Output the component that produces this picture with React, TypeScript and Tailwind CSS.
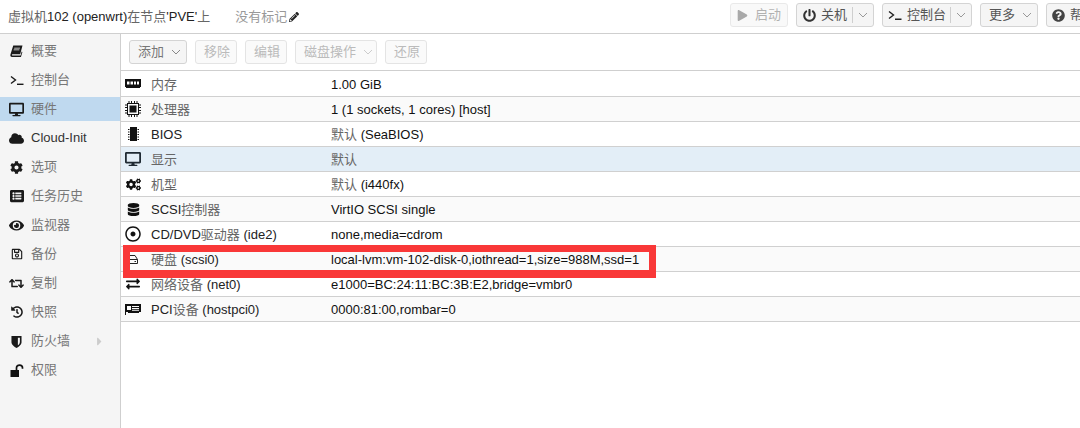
import React from "react";
import {
  FaDesktop, FaCloud, FaCog, FaCogs, FaListAlt, FaEye, FaRegSave, FaRetweet, FaHistory,
  FaPlay, FaPowerOff, FaQuestionCircle, FaPencilAlt, FaDatabase,
  FaRegDotCircle, FaExchangeAlt, FaCaretRight,
} from "react-icons/fa";

const Term = ({ className = "" }: { className?: string }) => (
  <svg viewBox="0 0 14 12" width="14" height="12" className={className} fill="none" stroke="currentColor" strokeWidth="1.4">
    <path d="M1 2.5 L5.5 6 L1 9.5" />
    <path d="M7 10.3 H13.5" />
  </svg>
);

const Chevron = ({ c = "#777" }: { c?: string }) => (
  <svg viewBox="0 0 10 6" width="10" height="6" fill="none" stroke={c} strokeWidth="1">
    <path d="M1 1 L5 5 L9 1" />
  </svg>
);

const Book = () => (
  <svg viewBox="0 0 14 13" width="13" height="12" fill="#1a1a1a">
    <path d="M3.5 0.5 H13.5 L11 10 H2.6 C1.9 10 1.7 11.3 2.6 11.3 H11.4 L12.6 7 L13.4 7.6 L11.8 13 H2.2 C0.6 13 0 11.6 0.5 10 Z" />
    <path d="M4.6 3 H10.8 L10.6 3.8 H4.4 Z M4 5 H10.2 L10 5.8 H3.8 Z" fill="#f5f5f5" />
  </svg>
);

const Shield = () => (
  <svg viewBox="0 0 12 14" width="11" height="13">
    <path d="M0.5 1 H11.5 V7.5 C11.5 10.5 8.5 12.8 6 14 C3.5 12.8 0.5 10.5 0.5 7.5 Z" fill="#1a1a1a" />
    <path d="M7.5 3 H9.7 V7.5 C9.7 9 8.6 10.4 7.5 11.2 Z" fill="#f5f5f5" />
  </svg>
);

const Unlock = () => (
  <svg viewBox="0 0 14 13" width="14" height="13">
    <rect x="0.5" y="6" width="8.5" height="7" fill="#111" />
    <path d="M6.5 6 V3.8 C6.5 0.2 12.5 0.2 12.5 3.8 V4.8" fill="none" stroke="#111" strokeWidth="1.7" />
  </svg>
);

const Mem = () => (
  <svg viewBox="0 0 16 10" width="16" height="10" fill="#111">
    <path fillRule="evenodd" d="M0 0 H16 V8 H15 V9 H1 V8 H0 Z M2 2.5 V5.5 H4.5 V2.5 Z M5.5 2.5 V5.5 H8 V2.5 Z M9 2.5 V5.5 H11 V2.5 Z M12 2.5 V5.5 H14 V2.5 Z" />
  </svg>
);

const Cpu = () => (
  <svg viewBox="0 0 16 16" width="16" height="16" fill="#111">
    <path fillRule="evenodd" d="M2 2 H14 V14 H2 Z M3 3 V13 H13 V3 Z" />
    <rect x="4.5" y="4.5" width="7" height="7" />
    <path d="M3.5 0h1v2h-1zM6 0h1v2H6zM9 0h1v2H9zM11.5 0h1v2h-1zM3.5 14h1v2h-1zM6 14h1v2H6zM9 14h1v2H9zM11.5 14h1v2h-1zM0 3.5h2v1H0zM0 6h2v1H0zM0 9h2v1H0zM0 11.5h2v1H0zM14 3.5h2v1h-2zM14 6h2v1h-2zM14 9h2v1h-2zM14 11.5h2v1h-2z" />
  </svg>
);

const Chip = () => (
  <svg viewBox="0 0 11 14" width="11" height="14" fill="#111">
    <rect x="2" y="0" width="7" height="14" />
    <path d="M0 2h1.5v1H0zM0 4.5h1.5v1H0zM0 7h1.5v1H0zM0 9.5h1.5v1H0zM0 12h1.5v1H0zM9.5 2H11v1H9.5zM9.5 4.5H11v1H9.5zM9.5 7H11v1H9.5zM9.5 9.5H11v1H9.5zM9.5 12H11v1H9.5z" />
  </svg>
);

const Hdd = () => (
  <svg viewBox="0 0 10 9" width="10" height="9" fill="none" stroke="#222" strokeWidth="1">
    <path d="M1.5 0.5 H7 L9.5 4.5 V8.5 H0.5 V0.5 M0.5 4.5 H9.5" />
    <path d="M6.5 6.5 H8" />
  </svg>
);

const Pci = () => (
  <svg viewBox="0 0 16 11" width="16" height="11" fill="#111">
    <path fillRule="evenodd" d="M0 0 H16 V8 H14 V9 H3 V8 H0 Z M2 2 V6 H6 V2 Z M7 2 V3 H14 V2 Z M7 4 V5.2 H14 V4 Z M7 6 V6.8 H14 V6 Z" />
    <path d="M0 0 H1 V11 H0 Z" />
  </svg>
);

const CJK = /([\u3400-\u9fff]+)/;

// CJK runs render lighter than Latin runs in the reference.
const Txt = ({ s, cjk, latin }: { s: string; cjk: string; latin: string }) => (
  <span className={`whitespace-nowrap ${latin}`}>
    {s.split(CJK).map((p, i) =>
      CJK.test(p) ? <span key={i} className={cjk}>{p}</span> : <span key={i}>{p}</span>
    )}
  </span>
);

const nav: { icon: React.ReactNode; label: string; active?: boolean; caret?: boolean }[] = [
  { icon: <Book />, label: "概要" },
  { icon: <Term />, label: "控制台" },
  { icon: <FaDesktop size={15} />, label: "硬件", active: true },
  { icon: <FaCloud size={15} />, label: "Cloud-Init" },
  { icon: <FaCog size={13} />, label: "选项" },
  { icon: <FaListAlt size={14} />, label: "任务历史" },
  { icon: <FaEye size={15} />, label: "监视器" },
  { icon: <FaRegSave size={12} />, label: "备份" },
  { icon: <FaRetweet size={15} />, label: "复制" },
  { icon: <FaHistory size={12} />, label: "快照" },
  { icon: <Shield />, label: "防火墙", caret: true },
  { icon: <Unlock />, label: "权限" },
];

const rows: { icon: React.ReactNode; k: string; v: string; sel?: boolean }[] = [
  { icon: <Mem />, k: "内存", v: "1.00 GiB" },
  { icon: <Cpu />, k: "处理器", v: "1 (1 sockets, 1 cores) [host]" },
  { icon: <Chip />, k: "BIOS", v: "默认 (SeaBIOS)" },
  { icon: <FaDesktop size={16} color="#1f2a33" />, k: "显示", v: "默认", sel: true },
  { icon: <FaCogs size={15} color="#111" />, k: "机型", v: "默认 (i440fx)" },
  { icon: <FaDatabase size={13} color="#111" />, k: "SCSI控制器", v: "VirtIO SCSI single" },
  { icon: <FaRegDotCircle size={16} color="#111" />, k: "CD/DVD驱动器 (ide2)", v: "none,media=cdrom" },
  { icon: <Hdd />, k: "硬盘 (scsi0)", v: "local-lvm:vm-102-disk-0,iothread=1,size=988M,ssd=1" },
  { icon: <FaExchangeAlt size={14} color="#111" />, k: "网络设备 (net0)", v: "e1000=BC:24:11:BC:3B:E2,bridge=vmbr0" },
  { icon: <Pci />, k: "PCI设备 (hostpci0)", v: "0000:81:00,rombar=0" },
];

const ToolBtn = ({ children, disabled, w }: { children: React.ReactNode; disabled?: boolean; w: string }) => (
  <div className={`h-6 ${w} flex items-center gap-[7px] pl-[8px] rounded-[3px] border border-[#d4d4d4] text-[13px] whitespace-nowrap ${disabled ? "bg-[#fafafa] border-[#e4e4e4] text-[#bbb]" : "bg-[#f5f5f5] text-[#777]"}`}>
    {children}
  </div>
);

const TopBtn = ({ children, w, dim }: { children: React.ReactNode; w: string; dim?: boolean }) => (
  <div className={`h-6 ${w} shrink-0 flex items-center rounded-[3px] border border-[#d4d4d4] bg-[#f5f5f5] text-[13px] text-[#555] overflow-hidden ${dim ? "opacity-50" : ""}`}>
    {children}
  </div>
);

const Split = () => (
  <div className="ml-auto flex items-center h-[16px] border-l border-[#cfcfcf] pl-[5px] pr-[5px]">
    <Chevron c="#999" />
  </div>
);

export default function App() {
  return (
    <div className="relative w-[1080px] h-[428px] overflow-hidden bg-white text-[13px] text-[#000] flex flex-col" style={{ fontFamily: '"Liberation Sans", "Noto Sans CJK SC", sans-serif' }}>
      <div className="h-[34px] shrink-0 flex items-center border-b border-[#cfcfcf]">
        <div className="ml-2 text-[13px]"><Txt s="虚拟机102 (openwrt)在节点'PVE'上" cjk="text-[#666]" latin="text-[#222]" /></div>
        <div className="ml-[25px] text-[#999] whitespace-nowrap flex items-center gap-[2px]">没有标记<FaPencilAlt size={10} color="#222" /></div>
        <div className="ml-auto flex items-center w-[350px] shrink-0 gap-[8px] mb-[3px]">
          <TopBtn w="w-[58px]" dim>
            <FaPlay size={11} color="#555" className="ml-[6px]" /><span className="ml-[7px] text-[#666]">启动</span>
          </TopBtn>
          <TopBtn w="w-[78px]">
            <FaPowerOff size={13} color="#333" className="ml-[6px]" /><span className="ml-[5px]">关机</span><Split />
          </TopBtn>
          <TopBtn w="w-[90px]">
            <Term className="ml-[5px] text-[#222]" /><span className="ml-[5px]">控制台</span><Split />
          </TopBtn>
          <TopBtn w="w-[58px]">
            <span className="ml-[8px]">更多</span><span className="ml-[7px]"><Chevron c="#999" /></span>
          </TopBtn>
          <TopBtn w="w-[60px]">
            <FaQuestionCircle size={13} color="#444" className="ml-[5px]" /><span className="ml-[5px] whitespace-nowrap">帮助</span>
          </TopBtn>
        </div>
      </div>
      <div className="flex flex-1 min-h-0">
        <div className="w-[121px] shrink-0 bg-[#f5f5f5] border-r border-[#cfcfcf] pt-[5px]">
          {nav.map((n) => (
            <div key={n.label} className={`h-[24px] mb-[5px] flex items-center ${n.active ? "bg-[#bfd9ef]" : ""}`}>
              <div className="w-[30px] pl-[3px] shrink-0 flex items-center justify-center text-[#1a1a1a]">{n.icon}</div>
              <span className="ml-[1px] text-[13px]"><Txt s={n.label} cjk="text-[#777]" latin="text-[#333]" /></span>
              {n.caret && <FaCaretRight size={13} color="#ccc" className="ml-[23px]" />}
            </div>
          ))}
        </div>
        <div className="flex-1 min-w-0 flex flex-col">
          <div className="h-[37px] shrink-0 flex items-center gap-[8px] pl-[8px] border-b border-[#cfcfcf]">
            <ToolBtn w="w-[58px]">添加<Chevron c="#888" /></ToolBtn>
            <ToolBtn w="w-[42px]" disabled>移除</ToolBtn>
            <ToolBtn w="w-[42px]" disabled>编辑</ToolBtn>
            <ToolBtn w="w-[82px]" disabled>磁盘操作<Chevron c="#ccc" /></ToolBtn>
            <ToolBtn w="w-[42px]" disabled>还原</ToolBtn>
          </div>
          {rows.map((r, i) => (
            <div key={r.k} className={`${i === 0 ? "h-[26px]" : "h-[25px]"} shrink-0 flex items-center border-b border-[#d0d0d0] ${r.sel ? "bg-[#e3eef7]" : i % 2 ? "bg-[#fafafa]" : "bg-white"}`}>
              <div className="w-[22px] ml-[1px] shrink-0 flex justify-center">{r.icon}</div>
              <div className="ml-[7px] w-[180px] shrink-0 pt-[2px]"><Txt s={r.k} cjk="text-[#666]" latin="text-[#222]" /></div>
              <div className="pt-[2px]"><Txt s={r.v} cjk="text-[#666]" latin="text-[#111]" /></div>
            </div>
          ))}
        </div>
      </div>
      <div className="absolute left-[123px] top-[245px] w-[533px] h-[33px] border-[#f93838] border-t-[7px] border-b-[8px] border-x-[7px] pointer-events-none" />
    </div>
  );
}
